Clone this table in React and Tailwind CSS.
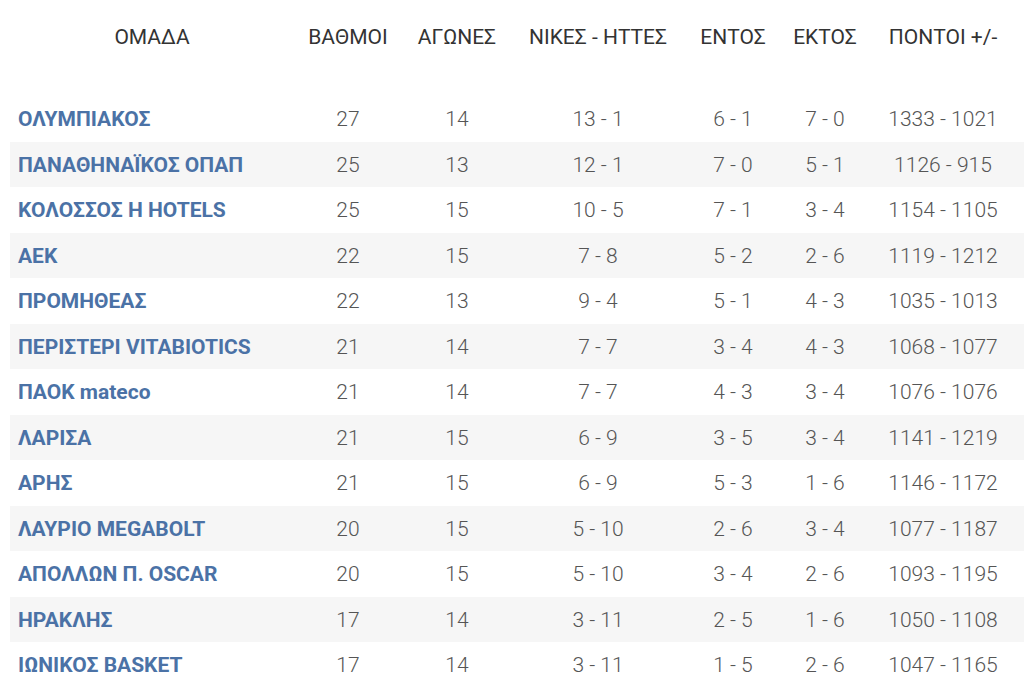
import React from "react";

const rows = [
  ["ΟΛΥΜΠΙΑΚΟΣ", "27", "14", "13 - 1", "6 - 1", "7 - 0", "1333 - 1021"],
  ["ΠΑΝΑΘΗΝΑΪΚΟΣ ΟΠΑΠ", "25", "13", "12 - 1", "7 - 0", "5 - 1", "1126 - 915"],
  ["ΚΟΛΟΣΣΟΣ Η HOTELS", "25", "15", "10 - 5", "7 - 1", "3 - 4", "1154 - 1105"],
  ["ΑΕΚ", "22", "15", "7 - 8", "5 - 2", "2 - 6", "1119 - 1212"],
  ["ΠΡΟΜΗΘΕΑΣ", "22", "13", "9 - 4", "5 - 1", "4 - 3", "1035 - 1013"],
  ["ΠΕΡΙΣΤΕΡΙ VITABIOTICS", "21", "14", "7 - 7", "3 - 4", "4 - 3", "1068 - 1077"],
  ["ΠΑΟΚ mateco", "21", "14", "7 - 7", "4 - 3", "3 - 4", "1076 - 1076"],
  ["ΛΑΡΙΣΑ", "21", "15", "6 - 9", "3 - 5", "3 - 4", "1141 - 1219"],
  ["ΑΡΗΣ", "21", "15", "6 - 9", "5 - 3", "1 - 6", "1146 - 1172"],
  ["ΛΑΥΡΙΟ MEGABOLT", "20", "15", "5 - 10", "2 - 6", "3 - 4", "1077 - 1187"],
  ["ΑΠΟΛΛΩΝ Π. OSCAR", "20", "15", "5 - 10", "3 - 4", "2 - 6", "1093 - 1195"],
  ["ΗΡΑΚΛΗΣ", "17", "14", "3 - 11", "2 - 5", "1 - 6", "1050 - 1108"],
  ["ΙΩΝΙΚΟΣ BASKET", "17", "14", "3 - 11", "1 - 5", "2 - 6", "1047 - 1165"],
];

const headers = ["ΒΑΘΜΟΙ", "ΑΓΩΝΕΣ", "ΝΙΚΕΣ - ΗΤΤΕΣ", "ΕΝΤΟΣ", "ΕΚΤΟΣ", "ΠΟΝΤΟΙ +/-"];

const grid = "grid grid-cols-[284px_108px_110px_172px_98px_86px_150px_6px]";

export default function App() {
  return (
    <div
      className="w-[1024px] h-[685px] overflow-hidden bg-white pl-[10px] pt-[1px]"
      style={{ fontFamily: "Roboto, 'Noto Sans', sans-serif" }}
    >
      <div className={`${grid} h-[74px] items-center text-[21px] text-[#333]`}>
        <div className="text-center">ΟΜΑΔΑ</div>
        {headers.map((h) => (
          <div key={h} className="text-center whitespace-nowrap">{h}</div>
        ))}
        <div />
      </div>
      <div className="mt-[21px]">
        {rows.map((r, i) => (
          <div
            key={r[0]}
            className={`${grid} h-[45.5px] items-center ${i % 2 === 1 ? "bg-[#f6f6f6]" : "bg-white"}`}
          >
            <div className="pl-[8px] pt-[2px] font-bold text-[21px] text-[#4b72a6] whitespace-nowrap">
              {r[0]}
            </div>
            {r.slice(1).map((c, j) => (
              <div key={j} className="pt-[2px] text-center font-light text-[21px] text-[#555] whitespace-nowrap">
                {c}
              </div>
            ))}
            <div />
          </div>
        ))}
      </div>
    </div>
  );
}
